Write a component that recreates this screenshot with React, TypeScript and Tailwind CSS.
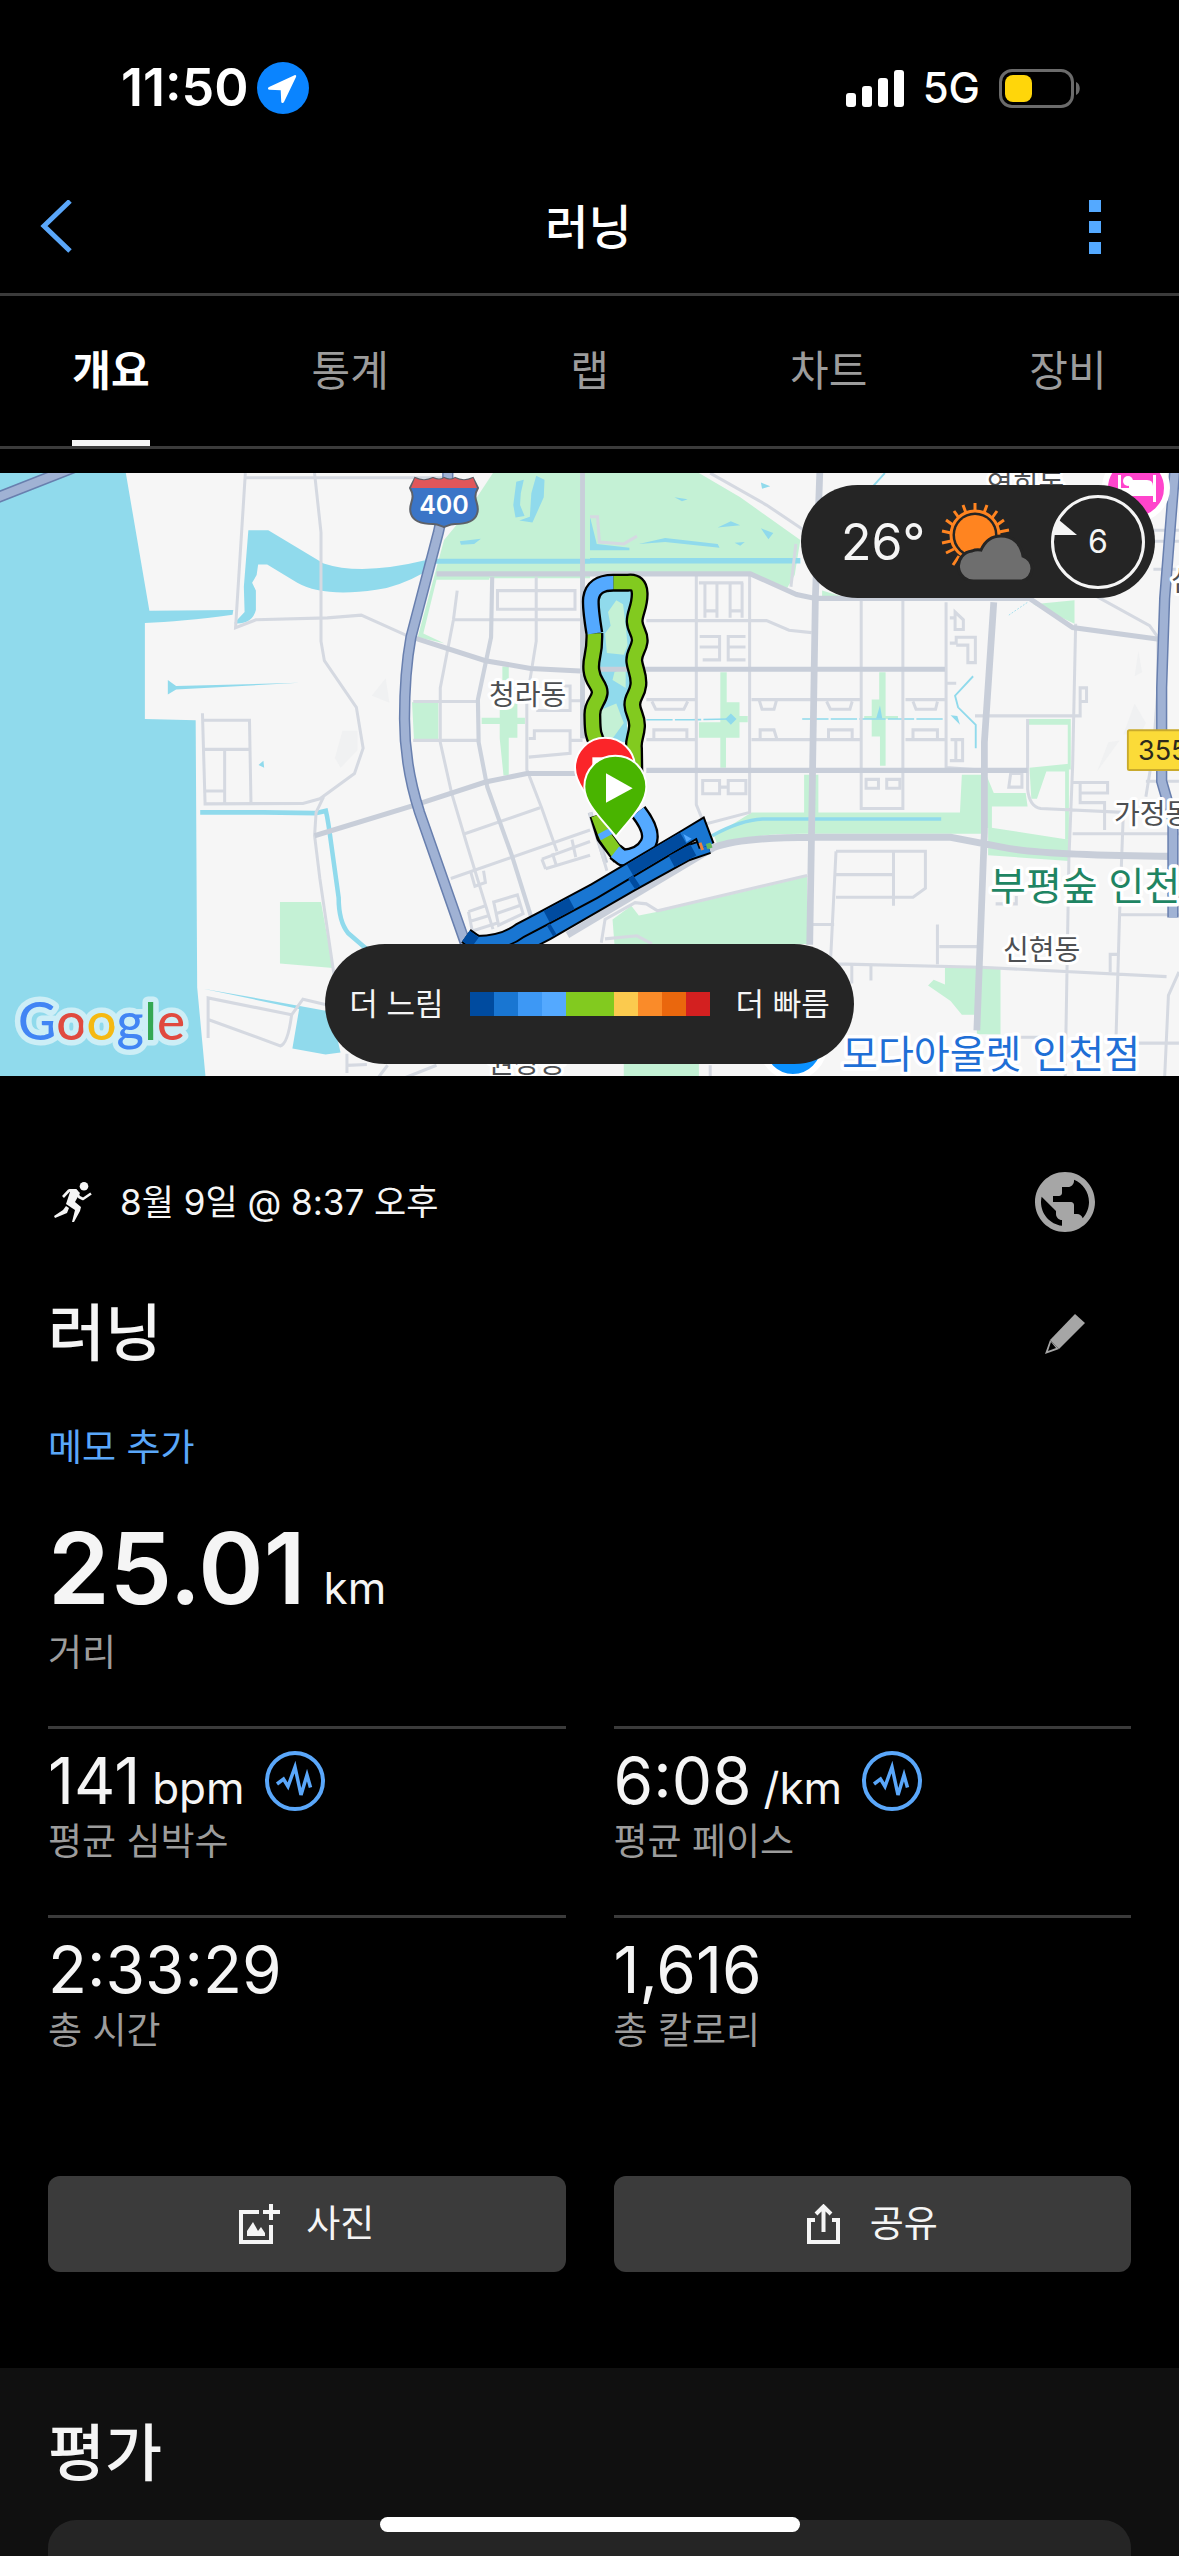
import { MdPublic } from "react-icons/md"

const tabs = ["개요", "통계", "랩", "차트", "장비"]

const paceColors = [
  "bg-[#004b9f]",
  "bg-[#1976d2]",
  "bg-[#3d98f5]",
  "bg-[#54a9ff]",
  "bg-[#82ca1f]",
  "bg-[#82ca1f]",
  "bg-[#fbca4e]",
  "bg-[#fa8b29]",
  "bg-[#ea670d]",
  "bg-[#d32020]",
]

const stats = [
  { value: "141", unit: "bpm", label: "평균 심박수", chart: true },
  { value: "6:08", unit: "/km", label: "평균 페이스", chart: true },
  { value: "2:33:29", label: "총 시간" },
  { value: "1,616", label: "총 칼로리" },
]

function StatusBar() {
  return (
    <div className="flex h-[156px] items-center justify-between pt-5 pl-[121px] pr-[98px] text-white">
      <div className="flex items-center gap-2">
        <span className="text-[52px] leading-[60px] font-semibold">11:50</span>
        <svg className="size-[52px]" viewBox="0 0 52 52" fill="none">
          <circle cx="26" cy="26" r="26" fill="#0a84ff" />
          <path d="M37.5 13.2 12 25c-1.600.8-1.300 2.600.5 2.800l11.200.5.5 11.200c.2 1.800 2 2.100 2.800.5L39 15c.6-1.300-.2-2.300-1.500-1.800Z" fill="#fff" />
        </svg>
      </div>
      <div className="flex items-center gap-[19px]">
        <svg className="h-[37px] w-[58px]" viewBox="0 0 58 37" fill="#fff">
          <rect x="0" y="23" width="10" height="14" rx="3" />
          <rect x="16" y="16" width="10" height="21" rx="3" />
          <rect x="32" y="8" width="10" height="29" rx="3" />
          <rect x="48" y="0" width="10" height="37" rx="3" />
        </svg>
        <span className="text-[42px] leading-[60px] font-medium">5G</span>
        <svg className="h-[39px] w-[82px]" viewBox="0 0 82 39" fill="none">
          <rect x="1.5" y="1.500" width="72" height="36" rx="11.500" stroke="#6b6b6b" strokeWidth="3" />
          <path d="M77 13c5 1.500 5 11.500 0 13Z" fill="#6b6b6b" />
          <rect x="6" y="6" width="27" height="27" rx="8" fill="#ffd60a" />
        </svg>
      </div>
    </div>
  )
}

function Header() {
  return (
    <header className="flex h-[140px] items-center justify-between border-b-[3px] border-[#3b3b3b] pt-1 pl-10 pr-[78px]">
      <button type="button" aria-label="뒤로" className="flex w-12">
        <svg className="h-[54px] w-8" viewBox="0 0 32 54" fill="none" stroke="#5aa7fa" strokeWidth="5">
          <path d="M30 1 4 26l26 25" />
        </svg>
      </button>
      <h1 className="text-[47px] leading-[60px] font-medium text-white">러닝</h1>
      <button type="button" aria-label="더 보기" className="flex w-3 flex-col gap-[9px]">
        <span className="size-3 bg-[#54a9ff]" />
        <span className="size-3 bg-[#54a9ff]" />
        <span className="size-3 bg-[#54a9ff]" />
      </button>
    </header>
  )
}

function Tabs() {
  return (
    <nav className="flex justify-between border-b-[3px] border-[#3b3b3b] px-[72px]">
      {tabs.map((tab, index) => (
        <button
          key={tab}
          type="button"
          className={
            index === 0
              ? "h-[150px] min-w-[78px] border-b-[6px] border-[#f5f5f5] pt-1 text-[42px] font-bold text-white"
              : "h-[150px] min-w-[78px] border-b-[6px] border-transparent pt-1 text-[42px] text-[#9c9c9c]"
          }
        >
          {tab}
        </button>
      ))}
    </nav>
  )
}

function WestMap() {
  return (
    <g transform="translate(0 -3) scale(.3763 .3891)" fill="none">
      <g fill="#90daec">
        <path d="M0 0H333L397 362 620 360 618 372Q480 390 385 393V640L520 643 524 1330 547 1568H0Z" />
        <path d="M660 155H713L860 240Q960 272 1130 232V262Q1060 300 1000 308 860 328 790 290L710 243H686L682 270 670 290 680 310V360Q670 398 622 394L650 365 648 300Z" />
        <path d="M446 540 468 555 795 547 468 564 446 577ZM687 758 700 747 702 765ZM540 1333 800 1378 880 1392 905 1497 865 1502 777 1487 795 1385Z" />
      </g>
      <g fill="#f0f1f2">
        <path d="M988 580 1025 535 1035 598ZM910 670H950V720L905 765 890 740Z" />
      </g>
      <g fill="#c4f1d5">
        <path d="M1310 8H1568V278H1300V282H1160L1125 420 1180 445 1110 430 1180 180 1240 110Z" />
        <path d="M1095 597H1165V692H1100ZM744 1110H853L885 1280 744 1268ZM1328 600H1375V688H1352V785H1338L1328 690Z" />
        <path d="M1280 637H1395V653H1280ZM1335 505H1352V540H1335Z" />
      </g>
      <g fill="#90daec">
        <path d="M1372 30 1392 25 1384 60 1382 90 1394 118 1370 122 1364 90ZM1425 15 1447 25 1445 70 1415 135 1380 130 1408 120 1412 60ZM1222 183 1278 177 1260 190 1225 192ZM1130 228H1568V241H1130Z" />
      </g>
      <path d="M532 880H700L838 882 866 876Q872 900 880 960L900 1100Q900 1160 925 1190L985 1240" stroke="#90daec" strokeWidth="12" />
      <g stroke="#d5d9e1" strokeWidth="8">
        <path d="M652 8 626 405 680 385 870 380 960 373 1080 425M650 20H1180" />
        <path d="M835 0 853 160V440L862 490 947 610 965 715 942 780 850 845 805 857 545 858 538 625M538 643H663L667 858M540 718H665M597 720V858M540 825H597" />
        <path d="M860 840 840 880 836 940 850 1050 888 1300M553 1460V1357L775 1400M553 1412 745 1480Q765 1475 775 1400L805 1360 870 1375" />
        <path d="M1215 310 1205 385 1170 560V700L1200 830 1240 960 1310 1180M1425 275V440L1400 590V770L1440 870 1480 980" />
        <path d="M1205 385H1548M1098 595H1265M1098 695H1272M1235 935 1435 868M1198 1050 1568 925M1322 310H1528V358H1322ZM1405 690 1420 690V670H1515V728L1405 738M1515 695H1548M1425 618H1515V555H1480M1515 593H1548" />
        <path d="M1440 1000 1568 955M1450 1025 1568 990M1440 1000 1450 1025M1468 985 1478 1015M1520 950 1530 995M1245 1135 1290 1120M1255 1185 1320 1165M1245 1135 1255 1185M1250 1160 1300 1145M1312 1110 1375 1092 1390 1140 1325 1170ZM1320 1140 1385 1118M1250 1030 1262 1070 1290 1060 1285 1030" />
        <path d="M922 1550V1500M922 1530 975 1528M1000 1568 1030 1530M1060 1568 1160 1530" />
      </g>
      <path d="M1308 275 1305 430 1270 590 1272 700 1295 815 1360 990 1412 1150" stroke="#ccd2dc" strokeWidth="11" />
      <path d="M836 940 1100 862 1290 802 1400 780H1530M1080 425 1290 490 1410 510 1568 518M1160 267H1568M1548 0V690M1568 880 1610 1010" stroke="#c8ced9" strokeWidth="13" />
      <path d="M-10 72 200 -8M1190 0V50L1165 160 1092 430Q1075 520 1075 640T1115 880L1240 1225" stroke="#687fae" strokeWidth="30" />
      <path d="M-10 72 200 -8M1190 0V50L1165 160 1092 430Q1075 520 1075 640T1115 880L1240 1225" stroke="#a0b2d4" strokeWidth="22" />
    </g>
  )
}

function EastMap() {
  return (
    <g transform="translate(590 -3) scale(.3756 .3891)" fill="none">
      <g fill="#c4f1d5">
        <path d="M0 8H290L400 70 560 180 545 270 525 303 430 265H0ZM618 310 680 328H618ZM1180 345 1290 335V395Z" />
        <path d="M330 940 430 880H985L990 783H1045V935H560Q420 935 340 965ZM570 783H608V880H570ZM1055 783 1075 830H1160L1165 865H1070V920H1055ZM1170 765 1275 755V950H1265V775H1215L1190 845H1175Z" />
        <path d="M1165 640H1280V770H1272V655H1165ZM1060 918 1275 950V1005L1060 990ZM60 1155 110 1120 130 1145 180 1135 578 1045V1218H65ZM945 1280H1093V1450H1030V1400H990L960 1365 900 1325 915 1310 945 1322ZM90 1525H290V1568H90Z" />
        <path d="M347 520H364V597H398V688H362V765H347V688H290V648H347V632H288V632H347ZM770 520H787V760H772V685H750V590H770ZM398 632H420V648H398ZM730 632H820V640H730Z" />
      </g>
      <g fill="#f0f1f2">
        <path d="M1350 775 1380 700 1410 695ZM1420 680 1450 600 1480 650 1465 680ZM1450 530 1460 465 1470 520Z" />
      </g>
      <g fill="#90daec">
        <path d="M0 226H560V240H0ZM0 120 18 190 105 200V206H0ZM225 70 260 75 245 80ZM340 148 375 132 400 142ZM455 150 488 162 475 178ZM455 32 480 42 458 48ZM295 50 355 55ZM130 190 200 175 340 190 345 200 200 185ZM385 187 412 185 400 195Z" />
        <path d="M15 300H112L105 400 112 500 98 640 100 700H18L25 520Z" />
        <path d="M360 640 375 626 390 640 375 655ZM762 638 772 605 778 638ZM960 630 978 632 985 655Z" />
      </g>
      <g fill="#c4f1d5">
        <path d="M70 335 88 345 95 400 100 450 90 475 45 470 40 420 55 400 48 365ZM65 520 95 505V560L60 540ZM20 620 70 600 90 650 60 690H20Z" />
      </g>
      <g stroke="#90daec">
        <path d="M325 940Q400 900 460 897H780L935 897" strokeWidth="9" />
        <path d="M150 642H270L375 640M565 640H950" strokeWidth="4" strokeDasharray="70 6" />
        <path d="M1020 530 972 580 980 610 1027 655V715M755 40 785 8" strokeWidth="5" />
        <path d="M1115 373 1165 340" strokeWidth="2" strokeDasharray="5 4" />
      </g>
      <g stroke="#d5d9e1" strokeWidth="8">
        <path d="M283 270V860L300 900M300 912 425 880V270M722 335V870H833V335M948 340V765L1050 772M150 387H470L530 412 590 418M320 8 470 90 570 155M0 120H20L25 185 90 190 125 170M548 190 535 300" />
        <path d="M150 590H283M150 693H283M430 590H720M430 693H722M840 590H945M840 693H945M165 595 175 615H250L260 595M170 693V668H258V693M630 595 640 615H692L698 595M635 690V668H698V690M860 595 868 615H920L925 595M860 690V668H925V690M450 590 458 615H490L497 590M453 690V668H490L497 690" />
        <path d="M290 290H408M306 290V380M338 290V380M373 290V380M405 290V380M306 362H338M373 362H405M292 428H345V488H300M292 455H345M414 428H368V488H414M368 455H414M300 798H345V832H300ZM368 798H415V832H368ZM345 815H368M735 795H768V818H735ZM790 795H825V818H790Z" />
        <path d="M958 380H972V365L994 385V410H972V380M958 445H975V430H1026V495H1006V450H975M960 693H992V747H958M974 693V747M950 548H975" />
        <path d="M1025 632H1305V560H1322V595H1305M1293 395 1285 760 1275 1000 1265 1568M1165 640V820Q1170 865 1200 870L1420 880M1285 935H1568M1420 880 1410 1140 1400 1475M1410 1143H1568M590 1270H680L1040 1278 1535 1302M590 1168H650M655 980H893V1075L860 1098H655M655 980 640 1270M655 1040H808M808 980V1120M925 1168V1270M930 1225H1035M1145 1458H1200M1460 1473H1568M1385 1290V1245H1405M1568 1290 1540 1350 1530 1560" />
        <path d="M1340 320 1490 400 1512 430V560L1500 720 1480 840M1285 803H1378V830H1305V855H1370V925M1305 803V855M1120 780H1150V815H1115ZM1500 155H1568M1500 183H1568M1500 255H1568M1480 800H1568M748 1272V1312M697 1270V1320M320 1530V1568M1080 1115H1135V1095" />
        <path d="M30 1215 40 1155 120 1112 150 1115 180 1133 578 1042M40 1205 125 1197 165 1218M0 880 45 1030" />
      </g>
      <path d="M0 267H427L550 320 600 330H1170L1285 405 1515 435M0 512H945M150 772H1165" stroke="#c8ced9" strokeWidth="13" />
      <path d="M612 0 600 330 585 1220M1075 340 1050 700V930L1030 1440M-60 1195 330 970Q400 944 590 944H960L1100 970Q1200 990 1550 993" stroke="#c8ced9" strokeWidth="18" />
      <path d="M1557 0 1530 330 1522 560V800L1552 900V1150" stroke="#687fae" strokeWidth="30" />
      <path d="M1557 0 1530 330 1522 560V800L1552 900V1150" stroke="#a0b2d4" strokeWidth="22" />
      <rect x="1432" y="669" width="160" height="102" rx="4" fill="#fbdb38" stroke="#c9aa2c" strokeWidth="5" />
    </g>
  )
}

function Route() {
  const west = "M163 220C165 290 150 290 154 330S182 375 179 400 156 430 157 465 155 530 180 560"
  const east = "M220 68H265Q298 64 299 100C300 140 283 160 284 185S302 220 299 245 280 280 283 305 298 345 295 375 276 410 277 435 293 470 291 500 279 540 282 565L283 640"
  const turn = "M163 220C155 170 150 140 153 115Q160 68 220 68"
  const south = "M295 755C330 800 335 830 325 850Q305 890 248 893L225 875"
  const north = "M-222 1128 -190 1150Q-110 1150 -60 1112L10 1075 160 995 430 835 480 805 500 858"
  const back = "M-90 1175 20 1118 270 974 440 880 505 858"
  return (
    <g transform="translate(540 87) scale(.3333)" fill="none" strokeLinejoin="round">
      <path d={[turn, west, east, south].join("")} stroke="#000" strokeWidth="54" />
      <path d="M172 765 192 830 240 893" stroke="#000" strokeWidth="48" />
      <path d={west + east} stroke="#82ca1f" strokeWidth="40" />
      <path d={turn} stroke="#54a9ff" strokeWidth="40" />
      <path d="M172 765 196 830 235 885" stroke="#82ca1f" strokeWidth="38" />
      <path d="M178 832 215 812" stroke="#54a9ff" strokeWidth="20" />
      <path d={south} stroke="#54a9ff" strokeWidth="40" />
      <path d={back} stroke="#000" strokeWidth="50" strokeLinejoin="miter" />
      <path d={back} stroke="#1976d2" strokeWidth="38" strokeLinejoin="miter" />
      <path d={north} stroke="#000" strokeWidth="50" strokeLinejoin="miter" />
      <path d={north} stroke="#1976d2" strokeWidth="38" strokeLinejoin="miter" />
      <path d="M270 930 430 835M20 1070 95 1030M-222 1128-195 1148" stroke="#004b9f" strokeWidth="38" />
      <path d="M395 905 460 870M275 972 290 962M30 1113 40 1107" stroke="#004b9f" strokeWidth="38" />
      <path d="M480 848 488 870" stroke="#ea8340" strokeWidth="9" />
      <path d="M500 860 515 855" stroke="#62b85c" strokeWidth="16" />
      <path d="M430 822 455 836 440 846Z" fill="#54a9ff" />
      <path d="M195 533a90 90 0 0 1 90 90c0 45-40 92-90 150-50-58-90-105-90-150a90 90 0 0 1 90-90Z" fill="#fb2529" stroke="#fff" strokeWidth="6" />
      <path d="M157 592h80v60h-80Z" fill="#fff" />
      <path d="M226 587a93 93 0 0 1 93 93c0 48-42 90-91 150-50-60-95-102-95-150a93 93 0 0 1 93-93Z" fill="#49b400" stroke="#fff" strokeWidth="6" />
      <path d="m198 640 80 45-80 43Z" fill="#fff" />
    </g>
  )
}

function MapView() {
  return (
    <svg className="block h-[603px] w-full" viewBox="0 0 1179 603" preserveAspectRatio="xMidYMid slice">
      <rect width="1179" height="603" fill="#f6f6f6" />
      <WestMap />
      <EastMap />
      <g stroke="#5d6169" strokeWidth="2">
        <path d="M415 5c6 3 12 3 18 0 4 2 8 2 11 0 4 2 8 2 11 0 6 3 12 3 18 0l5 10c-7 12 3 16-1 26-3 9-15 10-22 10-5 0-8 2-11 3-3-1-6-3-11-3-7 0-19-1-22-10-4-10 6-14-1-26Z" fill="#3b75c7" />
        <path d="M415 5c6 3 12 3 18 0 4 2 8 2 11 0 4 2 8 2 11 0 6 3 12 3 18 0l4 10H411Z" fill="#e0565a" stroke="none" />
      </g>
      <g fontSize="28" fill="#4d4f52" stroke="#fff" strokeWidth="6" strokeLinejoin="round" paintOrder="stroke">
        <text x="489" y="232">청라동</text>
        <text x="1003" y="487">신현동</text>
        <text x="1114" y="351">가정동</text>
        <text x="987" y="22">연희동</text>
        <text x="488" y="600">원창동</text>
        <text x="1171" y="118">심</text>
      </g>
      <g fontSize="39" stroke="#fff" strokeWidth="7" strokeLinejoin="round" paintOrder="stroke">
        <text x="990" y="427" fill="#1f8563">부평숲 인천</text>
        <text x="842" y="595" fill="#1f6fd6">모다아울렛 인천점</text>
      </g>
      <text x="444" y="41" fontSize="25" fontWeight="600" fill="#fff" textAnchor="middle">400</text>
      <text x="1138" y="287" fontSize="27" fill="#2c2a1c">355</text>
      <Route />
      <circle cx="793" cy="573" r="31" fill="#0a91ff" stroke="#fff" strokeWidth="6" />
      <circle cx="1136" cy="15" r="31" fill="#ff44cc" stroke="#fff" strokeWidth="6" />
      <path d="M1118 2h3v13h8V7h18q6 0 6 6v2V2h3v27h-3v-6h-32v6h-3Z" fill="#fff" />
      <circle cx="1128" cy="8" r="5" fill="#fff" />
      <text x="18" y="567" fontSize="53" fontWeight="500" fontFamily="Lato, sans-serif" stroke="#cdeef6" strokeWidth="11" strokeLinejoin="round" paintOrder="stroke">
        <tspan fill="#4285f4">G</tspan>
        <tspan fill="#e04a3f">o</tspan>
        <tspan fill="#f5b912">o</tspan>
        <tspan fill="#4285f4">g</tspan>
        <tspan fill="#34a853">l</tspan>
        <tspan fill="#e04a3f">e</tspan>
      </text>
    </svg>
  )
}

function WeatherIcon() {
  return (
    <svg className="h-[78px] w-[94px]" viewBox="0 0 94 78" fill="none">
      <g stroke="#ff8420" strokeWidth="3">
        <circle cx="34" cy="32" r="24" />
        <path d="M34 8V0M43 10l3-8M51 15l5-7M56 22l7-5M58 29l10-2M25 10l-3-8M18 15l-5-7M12 22l-7-5M10 30l-9-2M10 38l-9 2M13 46l-8 4M18 53l-6 9" />
      </g>
      <circle cx="34" cy="32" r="20" fill="#ff8420" />
      <path
        d="M34 78a15 15 0 0 1-3-30q4-2 9-1C45 36 53 33 60 33c12 0 20 8 22 20a13 13 0 0 1-1 25Z"
        fill="#6e6e6e"
        stroke="#252525"
        strokeWidth="3"
      />
    </svg>
  )
}

function MapPanel() {
  return (
    <section className="relative mt-6">
      <MapView />
      <div className="absolute top-3 right-6 flex h-[113px] w-[354px] items-center justify-between rounded-full bg-[#252525] pr-[10px] pl-10 text-[#f5f5f5]">
        <span className="text-[50px] leading-[60px]">26°</span>
        <WeatherIcon />
        <div className="relative flex size-[94px] items-center justify-center rounded-full border-[3px] border-[#f5f5f5]">
          <svg className="absolute top-[22px] left-0 h-4 w-6" viewBox="0 0 24 16" fill="#f5f5f5">
            <path d="M5 0 23 15H-2Z" />
          </svg>
          <span className="text-[32px] leading-10">6</span>
        </div>
      </div>
      <div className="absolute inset-x-0 bottom-3 flex justify-center">
        <div className="flex h-[120px] items-center gap-[26px] rounded-full bg-[#252525] px-6 text-[31px] leading-10 text-[#f5f5f5]">
          <span>더 느림</span>
          <div className="flex">
            {paceColors.map((color, index) => (
              <span key={index} className={`size-6 ${color}`} />
            ))}
          </div>
          <span>더 빠름</span>
        </div>
      </div>
    </section>
  )
}

function RunnerIcon() {
  return (
    <svg className="h-10 w-[38px]" viewBox="0 0 38 40" fill="none" stroke="#f5f5f5" strokeLinejoin="round">
      <circle cx="30" cy="4.300" r="4.300" fill="#f5f5f5" stroke="none" />
      <path d="M9 15 15 8.500H22L25 15 29 17 37 11.500" strokeWidth="2.600" />
      <path d="M15 7h7l4 4-5 9 6 5-1 4-6 11h-2l3-12-9-6 4-12Z" fill="#f5f5f5" stroke="none" />
      <path d="M12 24 15 26 13 31 1 36 0 34 9 28Z" fill="#f5f5f5" stroke="none" />
    </svg>
  )
}

function Summary() {
  return (
    <section className="px-12 pt-[72px] pb-24 text-[#f5f5f5]">
      <div className="flex h-[108px] items-center justify-between pr-[30px] pl-[6px]">
        <div className="flex items-center gap-7">
          <RunnerIcon />
          <time className="text-[35px] leading-[50px]">8월 9일 @ 8:37 오후</time>
        </div>
        <button type="button" aria-label="공개 범위">
          <MdPublic className="size-[72px] text-[#a6a6a6]" />
        </button>
      </div>

      <div className="flex h-[156px] items-center justify-between pr-[46px]">
        <h2 className="text-[62px] leading-[76px] font-medium">러닝</h2>
        <button type="button" aria-label="이름 편집">
          <svg className="size-10" viewBox="0 0 40 40" fill="#a6a6a6">
            <path d="M30 0 40 9 14 35 5 26Z" />
            <path d="M5 26 0 40 14 35ZM6 28 11 34 3 37Z" fillRule="evenodd" />
          </svg>
        </button>
      </div>

      <button type="button" className="block h-[72px] text-[37px] leading-[50px] text-[#5aa7fa]">
        메모 추가
      </button>

      <div className="mt-6 flex h-[120px] items-baseline gap-[18px] leading-[120px]">
        <span className="text-[99px] font-semibold">25.01</span>
        <span className="text-[44px] leading-[60px]">km</span>
      </div>
      <p className="text-[37px] leading-[50px] text-[#9c9c9c]">거리</p>

      <div className="mt-12 grid grid-cols-2 gap-x-12">
        {stats.map((stat) => (
          <div key={stat.label} className="border-t-[3px] border-[#3b3b3b] pt-3 pb-[52px]">
            <div className="flex h-20 items-center gap-5">
              <div className="flex h-20 items-baseline gap-3 leading-[80px]">
                <span className="text-[64px]">{stat.value}</span>
                {stat.unit && <span className="text-[44px] leading-[60px]">{stat.unit}</span>}
              </div>
              {stat.chart && (
                <button type="button" aria-label={`${stat.label} 차트`}>
                  <svg className="size-[60px]" viewBox="0 0 60 60" fill="none" stroke="#5aa7fa" strokeWidth="4">
                    <circle cx="30" cy="30" r="28" />
                    <path d="M12 33 18.500 28 23 35.500 30 16 36 44 42 24 45.500 36.500" strokeWidth="3.500" />
                  </svg>
                </button>
              )}
            </div>
            <p className="text-[37px] leading-[42px] text-[#9c9c9c]">{stat.label}</p>
          </div>
        ))}
      </div>

      <div className="mt-[72px] grid grid-cols-2 gap-12 text-[37px] leading-[50px]">
        <button type="button" className="flex h-24 items-center justify-center gap-[26px] rounded-xl bg-[#3b3b3b]">
          <svg className="h-10 w-[41px]" viewBox="0 0 41 40" fill="none" stroke="#f5f5f5" strokeWidth="4">
            <path d="M20 8H2V38H32V21M32 0V16M24 8H41" />
            <path d="M8 32V27L14 18 19 27 22 23 26 29V32Z" fill="#f5f5f5" stroke="none" />
          </svg>
          사진
        </button>
        <button type="button" className="flex h-24 items-center justify-center gap-[30px] rounded-xl bg-[#3b3b3b]">
          <svg className="h-10 w-[33px]" viewBox="0 0 33 40" fill="none" stroke="#f5f5f5" strokeWidth="4">
            <path d="M8 16H2V38H31V16H25M16.500 28V4M9 10 16.500 2.500 24 10" />
          </svg>
          공유
        </button>
      </div>
    </section>
  )
}

export default function App() {
  return (
    <div className="relative flex min-h-screen flex-col bg-black font-[Inter,'Noto_Sans_CJK_KR',sans-serif]">
      <StatusBar />
      <Header />
      <Tabs />
      <MapPanel />
      <Summary />
      <section className="flex flex-1 flex-col bg-[#101010] px-12 pt-12">
        <h2 className="text-[62px] leading-[76px] font-medium text-[#f5f5f5]">평가</h2>
        <div className="mt-7 min-h-9 flex-1 rounded-t-[28px] bg-[#252525]" />
      </section>
      <div className="absolute inset-x-0 bottom-6 flex justify-center">
        <div className="h-[15px] w-[420px] rounded-full bg-white" />
      </div>
    </div>
  )
}
